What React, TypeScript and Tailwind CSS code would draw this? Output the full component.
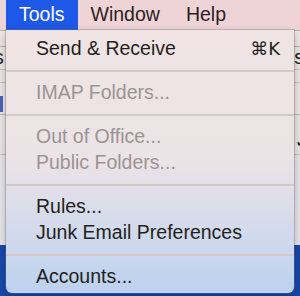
import { Fragment } from 'react';

type Item = { label: string; shortcut?: string; disabled?: boolean };

const groups: Item[][] = [
  [{ label: 'Send & Receive', shortcut: '⌘K' }],
  [{ label: 'IMAP Folders...', disabled: true }],
  [
    { label: 'Out of Office...', disabled: true },
    { label: 'Public Folders...', disabled: true },
  ],
  [{ label: 'Rules...' }, { label: 'Junk Email Preferences' }],
  [{ label: 'Accounts...' }],
];

const menus = ['Tools', 'Window', 'Help'];

const App = () => {
  return (
    <div
      className="relative w-[300px] h-[296px] overflow-hidden flex flex-col bg-[#e9e4e4] text-[19.5px] leading-none"
      style={{ fontFamily: '"Liberation Sans", Arial, sans-serif' }}
    >
      {/* Menu bar */}
      <div className="h-[30px] shrink-0 flex items-stretch bg-[#efd4d7] pl-[6px]">
        {menus.map((m, i) => (
          <div
            key={m}
            className={
              i === 0
                ? 'flex items-center px-[13px] bg-[#1d58e6] text-white'
                : 'flex items-center px-[13px] text-[#2a1e1f]'
            }
          >
            {m}
          </div>
        ))}
      </div>

      {/* Window behind the menu */}
      <div className="flex-1 flex flex-col text-[#222]">
        <div className="h-[17px] border-t border-b border-[#b9b1b1] bg-[#ece6e6]" />
        <div className="h-[23px] flex items-center justify-between border-b border-[#c9c1c1] bg-[#ece6e6]">
          <span className="-ml-[6px]">s</span>
          <span className="-mr-[4px]">s</span>
        </div>
        <div className="h-[13px] border-b border-[#c9c1c1] bg-[#ece6e6]" />
        <div className="h-[32px] flex items-end border-b border-[#bdb5b5] bg-[#ebe6e7]">
          <span className="mb-[2px] w-[3px] h-[16px] bg-[#4a63b8]" />
        </div>
        <div className="h-[40px] flex items-end justify-end border-b border-[#c9c1c1] bg-[#e9e5e7]">
          <span className="-mr-[8px] mb-[4px] text-[16px]">✓</span>
        </div>
        <div className="h-[90px] bg-[#e6e5ea]" />
        <div className="flex-1 bg-[#1848ad]" />
      </div>

      {/* Tools dropdown */}
      <div className="absolute left-[6px] top-[30px] w-[288px] h-[263px] rounded-b-[6px] bg-gradient-to-b from-[#f0e4e4] via-[#ebe3e6] to-[#bcd2f0] shadow-[0_0_0_1px_rgba(120,110,110,0.35),0_4px_10px_rgba(0,0,0,0.25)] pt-[6px] text-[#231f20]">
        {groups.map((g, gi) => (
          <Fragment key={gi}>
            {gi > 0 && (
              <div className="h-[18px] flex items-center">
                <div className="w-full h-[2px] bg-[#d4c8ca]" />
              </div>
            )}
            {g.map((it) => (
              <div
                key={it.label}
                className={
                  it.disabled
                    ? 'h-[26px] flex items-center justify-between pl-[30px] pr-[14px] text-[#9c9394]'
                    : 'h-[26px] flex items-center justify-between pl-[30px] pr-[14px]'
                }
              >
                <span>{it.label}</span>
                {it.shortcut && (
                  <span
                    style={{ fontFamily: '"DejaVu Sans", "Liberation Sans", sans-serif' }}
                    className="text-[18px]"
                  >
                    {it.shortcut}
                  </span>
                )}
              </div>
            ))}
          </Fragment>
        ))}
      </div>
    </div>
  );
};

export default App;
